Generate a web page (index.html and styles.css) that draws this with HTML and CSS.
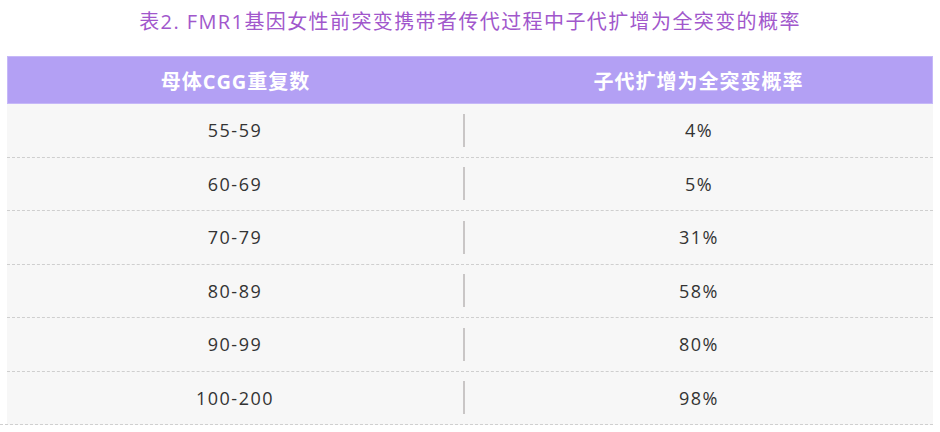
FILE: index.html
```html
<!DOCTYPE html>
<html lang="zh-CN">
<head>
<meta charset="utf-8">
<title>FMR1</title>
<link rel="stylesheet" href="styles.css">
</head>
<body>
<div class="page">
  <h1 class="title">表2. FMR1基因女性前突变携带者传代过程中子代扩增为全突变的概率</h1>
  <div class="table">
    <div class="head">
      <div class="cell">母体CGG重复数</div>
      <div class="sep"></div>
      <div class="cell">子代扩增为全突变概率</div>
    </div>
    <div class="row"><div class="cell">55-59</div><div class="bar"></div><div class="cell">4%</div></div>
    <div class="row"><div class="cell">60-69</div><div class="bar"></div><div class="cell">5%</div></div>
    <div class="row"><div class="cell">70-79</div><div class="bar"></div><div class="cell">31%</div></div>
    <div class="row"><div class="cell">80-89</div><div class="bar"></div><div class="cell">58%</div></div>
    <div class="row"><div class="cell">90-99</div><div class="bar"></div><div class="cell">80%</div></div>
    <div class="row last"><div class="cell">100-200</div><div class="bar"></div><div class="cell">98%</div></div>
  </div>
</div>
</body>
</html>
```
FILE: styles.css
```css
html, body {
  margin: 0;
  padding: 0;
  background: #ffffff;
}
body {
  font-family: "Open Sans", "Noto Sans CJK SC", sans-serif;
  width: 940px;
  height: 432px;
  overflow: hidden;
}
.page {
  display: flex;
  flex-direction: column;
}
.title {
  margin: 0 0 12px 0;
  height: 44px;
  line-height: 44px;
  text-align: center;
  font-size: 20px;
  font-weight: 400;
  letter-spacing: 1.4px;
  color: #a157cc;
  font-family: "Open Sans", "Noto Sans CJK SC", sans-serif;
}
.table {
  margin: 0 7px;
  display: flex;
  flex-direction: column;
}
.head {
  display: grid;
  grid-template-columns: 455px 2px 1fr;
  align-items: center;
  height: 48px;
  box-sizing: border-box;
  background: #b3a0f4;
  border: 1px solid #c6b8f8;
  color: #ffffff;
  font-weight: 700;
  font-size: 20px;
  letter-spacing: 1px;
}
.head .cell {
  text-align: center;
  font-family: "Open Sans", "Noto Sans CJK SC", sans-serif;
}
.row {
  display: grid;
  grid-template-columns: 456px 2px 1fr;
  align-items: center;
  height: 53.5px;
  box-sizing: border-box;
  background: #f7f7f7;
  border-bottom: 1px dashed #cfcfcf;
  color: #333333;
  font-size: 18px;
  letter-spacing: 1.5px;
}
.row .cell {
  text-align: center;
}
.bar {
  width: 2px;
  height: 33px;
  background: #c9c6c6;
}
.last {
  margin-left: -7px;
  padding-left: 7px;
  background: linear-gradient(to right, #ffffff 7px, #f7f7f7 7px);
  grid-template-columns: 456px 2px 1fr;
}
```
